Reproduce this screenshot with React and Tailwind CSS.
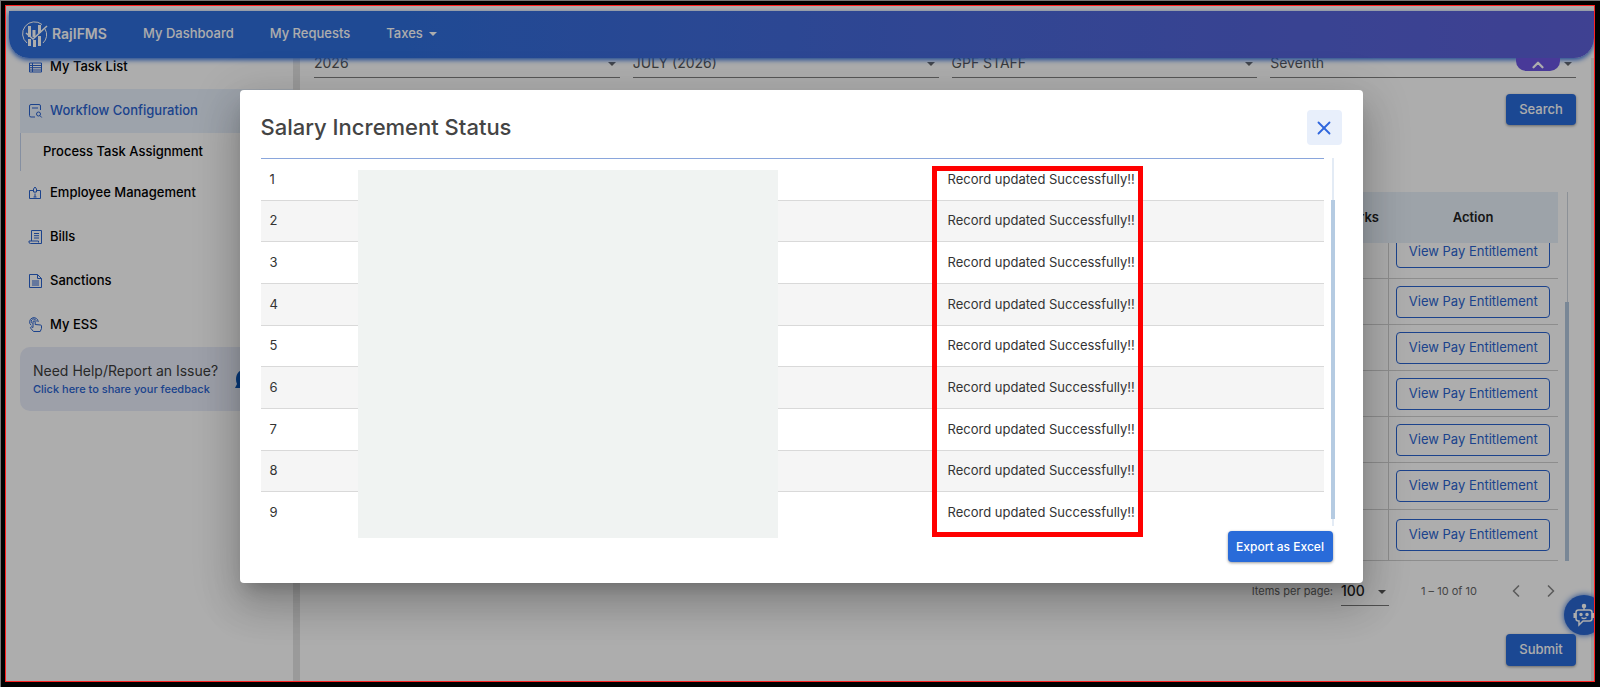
import { ChevronLeft, ChevronRight, ChevronUp, X } from 'lucide-react'

const filters = [
  { id: 'year', label: 'Year', value: '2026' },
  { id: 'month', label: 'Month', value: 'JULY (2026)' },
  { id: 'group', label: 'Bill group', value: 'GPF STAFF' },
  { id: 'commission', label: 'Pay commission', value: 'Seventh' },
]

const records = [1, 2, 3, 4, 5, 6, 7, 8, 9]

const payRows = ['h-[46px]', 'h-[46px]', 'h-[46px]', 'h-[46px]', 'h-[47px]', 'h-[51px]']

function Logo() {
  return (
    <svg viewBox="0 0 26 28" className="h-7 w-[26px]" fill="none" stroke="#fff" aria-hidden="true">
      <path d="M20 4.5A11 11 0 1 0 5 23M23 9a11 11 0 0 1-2 14" strokeWidth="1" />
      <path d="M7.5 6v11M12 10v7M17.5 5v8" strokeWidth="3" />
      <path d="M4 13l7 6L25 6" strokeWidth="1.6" />
      <path d="M7.5 19v7M12.5 20v7M17.5 16v10" strokeWidth="3" />
    </svg>
  )
}

function MenuIcon({ name }) {
  return (
    <svg viewBox="0 0 16 16" className="h-4 w-4 shrink-0" fill="none" stroke="#2a63cf" aria-hidden="true">
      {name === 'tasks' && <path d="M1.5 4h12v9h-12zM4.5 4v9M1.5 6.5h12M1.5 8.7h12M1.5 11h12" />}
      {name === 'workflow' && (
        <path d="M7 14H3A1.5 1.5 0 0 1 1.5 12.5V3A1.5 1.5 0 0 1 3 1.5h8A1.5 1.5 0 0 1 12.5 3v4M4 5h6M10.5 13a2 2 0 1 0 0-4 2 2 0 0 0 0 4M12 12.6l1.7 1.9" />
      )}
      {name === 'employee' && (
        <path d="M5.5 5.5h-4v8h11v-8h-4M5.5 7V4L7 2l1.5 2v3zM7 9v3M5.5 12h3M7 7.5v1" />
      )}
      {name === 'bills' && <path d="M3.5 1.5h10v13h-11A1.500 1.500 0 0 1 1 13v-1h9.500v1.500M3.500 1.500V12M6 4.500h5M6 6.700h5M6 9h5" />}
      {name === 'sanctions' && <path d="M1.5 1.5h8l4 4v9h-12zM9.5 1.5v4h4M4 8h7M4 10h7M4 12h7" />}
      {name === 'ess' && (
        <>
          <path d="M3.200 8.300A4.300 4.300 0 1 1 10.200 5M4.300 6.500A2.500 2.500 0 1 1 8.200 4.500" />
          <path d="M5 5v5.500L3.500 9.800c-.9 0-1.200.7-.8 1.400L5.500 14.500h6.700l1.300-3V9c0-.6-.5-1-1-1L7.200 7.500V5a1.100 1.100 0 0 0-2.200 0z" />
        </>
      )}
    </svg>
  )
}

function Caret({ className = '' }) {
  return (
    <svg viewBox="0 0 8 4" className={`h-1 w-2 ${className}`} fill="currentColor" aria-hidden="true">
      <path d="M0 0h8L4 4z" />
    </svg>
  )
}

function MenuItem({ icon, active, children }) {
  return (
    <a
      href="#"
      className={`flex h-11 items-center gap-1.5 pl-2 text-[13px] font-medium ${
        active ? 'bg-[#e8f0fd] text-[#2a63cf]' : 'text-black'
      }`}
    >
      <MenuIcon name={icon} />
      {children}
    </a>
  )
}

function Header() {
  return (
    <header className="relative z-10 ml-[3px] mt-[5px] flex h-[47px] items-center rounded-b-[20px] bg-linear-to-r from-[#2f6dda] from-25% to-[#5d60d7] pb-px pl-[13px] text-[13px] font-medium text-white shadow-[0_2px_5px_#2f6dda]">
      <a href="#" className="flex w-[121px] items-center gap-1 text-sm font-semibold">
        <Logo />
        RajIFMS
      </a>
      <nav className="flex items-center gap-9">
        <a href="#">My Dashboard</a>
        <a href="#">My Requests</a>
        <button type="button" className="flex items-center gap-1.5">
          Taxes
          <Caret />
        </button>
      </nav>
      <button
        type="button"
        aria-label="Collapse header"
        className="absolute right-[34px] top-full flex h-[13px] w-11 items-center justify-center rounded-b-[10px] bg-[#6a55e0]"
      >
        <ChevronUp size={18} strokeWidth={3} />
      </button>
    </header>
  )
}

function Sidebar() {
  return (
    <aside className="w-[287px] shrink-0 pl-[14px]">
      <nav className="-mt-[13px]">
        <MenuItem icon="tasks">My Task List</MenuItem>
        <MenuItem icon="workflow" active>Workflow Configuration</MenuItem>
        <a
          href="#"
          className="flex h-[38px] items-center border-l border-[#c5d3ee] pl-[22px] text-[13px] font-medium text-black"
        >
          Process Task Assignment
        </a>
        <MenuItem icon="employee">Employee Management</MenuItem>
        <MenuItem icon="bills">Bills</MenuItem>
        <MenuItem icon="sanctions">Sanctions</MenuItem>
        <MenuItem icon="ess">My ESS</MenuItem>
      </nav>
      <div className="flex h-16 items-center justify-between rounded-[10px] bg-[#e8ecfa] pl-[13px] pr-[30px]">
        <div>
          <p className="whitespace-nowrap text-sm text-[#3c3c3c]">Need Help/Report an Issue?</p>
          <a href="#" className="block text-[11px] font-medium text-[#2a63cf]">Click here to share your feedback</a>
        </div>
        <svg viewBox="0 0 28 24" className="h-6 w-7 shrink-0" fill="#0b55b5" aria-hidden="true">
          <path d="M0 21l2-4C-1 10 3 2 11 2s12 6 10 12-10 7-16 7z" />
        </svg>
      </div>
    </aside>
  )
}

function PrimaryButton({ className, children }) {
  return (
    <button
      type="button"
      className={`rounded bg-[#296bd9] font-medium text-white shadow-[0_1px_3px_#0006] ${className}`}
    >
      {children}
    </button>
  )
}

function PayTable() {
  return (
    <div className="mt-[67px] flex gap-[7px]">
      <table className="flex-1 text-[13px]">
        <thead>
          <tr className="h-[51px] bg-[#e8f0fa] text-[#222]">
            <th className="text-left font-semibold">Employee Name</th>
            <th className="w-[200px] pr-[9px] text-right font-semibold">Remarks</th>
            <th className="w-[170px] font-semibold">Action</th>
          </tr>
        </thead>
        <tbody>
          <tr className="border-b border-[#d0d0d0]">
            <td />
            <td className="border-r border-[#d0d0d0]" />
            <td>
              <div className="flex h-[35px] items-end justify-center overflow-hidden pb-[10px]">
                <ViewButton />
              </div>
            </td>
          </tr>
          {payRows.map((height, index) => (
            <tr key={index} className={`border-b border-[#d0d0d0] ${height}`}>
              <td />
              <td className="border-r border-[#d0d0d0]" />
              <td className="text-center">
                <ViewButton />
              </td>
            </tr>
          ))}
        </tbody>
      </table>
      <div className="flex w-1 flex-col items-center">
        <div className="h-[110px] w-px bg-[#cfd6df]" />
        <div className="w-1 flex-1 bg-[#b3c8dd]" />
      </div>
    </div>
  )
}

function ViewButton() {
  return (
    <button
      type="button"
      className="h-8 w-[154px] shrink-0 rounded border border-[#2a63cf] text-[13px] text-[#2a63cf]"
    >
      View Pay Entitlement
    </button>
  )
}

function Paginator() {
  return (
    <div className="mt-[15px] flex items-center justify-end pr-[15px] text-[11px] text-[#666]">
      <label htmlFor="page-size">Items per page:</label>
      <div className="relative ml-2 w-12">
        <select
          id="page-size"
          defaultValue="100"
          className="h-[30px] w-full appearance-none border-b border-[#777] text-sm font-medium text-[#222]"
        >
          <option>100</option>
        </select>
        <Caret className="pointer-events-none absolute right-[3px] top-[14px] text-[#555]" />
      </div>
      <span className="ml-8 w-[53px] whitespace-nowrap">1 – 10 of 10</span>
      <button type="button" aria-label="Previous page" className="ml-8 text-[#888]">
        <ChevronLeft size={20} />
      </button>
      <button type="button" aria-label="Next page" className="ml-[15px] text-[#888]">
        <ChevronRight size={20} />
      </button>
    </div>
  )
}

function Content() {
  return (
    <main className="min-w-0 flex-1 pl-[14px] pr-[15px]">
      <div className="-mt-[10px] grid grid-cols-4 gap-[13px]">
        {filters.map((filter) => (
          <div key={filter.id} className="relative">
            <select
              id={filter.id}
              aria-label={filter.label}
              defaultValue={filter.value}
              className="h-[30px] w-full appearance-none border-b border-[#808080] text-sm text-[#555]"
            >
              <option>{filter.value}</option>
            </select>
            <Caret className="pointer-events-none absolute right-1 top-[14px] text-[#666]" />
          </div>
        ))}
      </div>
      <div className="mt-4 flex justify-end">
        <PrimaryButton className="h-[31px] w-[70px] text-[13px]">Search</PrimaryButton>
      </div>
      <div className="pr-[7px]">
        <PayTable />
      </div>
      <Paginator />
      <div className="mt-7 flex justify-end">
        <PrimaryButton className="h-8 w-[70px] text-[13px]">Submit</PrimaryButton>
      </div>
    </main>
  )
}

function StatusDialog() {
  return (
    <div
      role="dialog"
      aria-labelledby="status-title"
      className="relative w-[1123px] rounded bg-white px-[21px] pb-[21px] shadow-[0_11px_15px_-7px_#0003,0_24px_38px_3px_#00000024,0_9px_46px_8px_#0000001f]"
    >
      <div className="flex items-center justify-between pt-5">
        <h2 id="status-title" className="text-[22px] font-medium text-[#444]">Salary Increment Status</h2>
        <button
          type="button"
          aria-label="Close"
          className="flex h-[35px] w-[35px] items-center justify-center rounded-sm bg-[#e8effb] text-[#2f66dd]"
        >
          <X size={22} strokeWidth={2} />
        </button>
      </div>

      <div className="mt-[13px] flex h-[368px] gap-[7px] overflow-hidden pr-[7px]">
        <table className="h-[376px] flex-1 table-fixed border-t border-[#8aa6dc] text-[13px] text-[#333]">
          <tbody>
            {records.map((record) => (
              <tr key={record} className="border-b border-[#d9d9d9] even:bg-[#f5f5f5]">
                <td className="w-[678px] pl-[9px]">{record}</td>
                <td className="pl-[9px]">Record updated Successfully!!</td>
              </tr>
            ))}
          </tbody>
        </table>
        <div className="flex w-1 flex-col items-center">
          <div className="h-[42px] w-0.5 bg-[#e3ebf5]" />
          <div className="w-1 flex-1 bg-[#b5cbe2]" />
          <div className="h-[7px] w-0.5 bg-[#e3ebf5]" />
        </div>
      </div>

      <div className="mt-[5px] flex justify-end pr-[9px]">
        <PrimaryButton className="h-[31px] w-[105px] text-xs">Export as Excel</PrimaryButton>
      </div>

      {/* redacted names and the highlighted status column */}
      <div className="absolute left-[118px] top-20 h-[368px] w-[420px] bg-[#f0f3f2]" />
      <div className="absolute left-[692px] top-[76px] h-[371px] w-[211px] border-[5px] border-[#ff0000]" />
    </div>
  )
}

function BotIcon() {
  return (
    <svg viewBox="0 0 24 24" className="h-6 w-6" fill="none" stroke="#fff" strokeWidth="1.5" aria-hidden="true">
      <path d="M6.5 7h11A2.5 2.5 0 0 1 20 9.5v6a2.5 2.5 0 0 1-2.5 2.5H11l-4 4v-4h-.5A2.5 2.5 0 0 1 4 15.5v-6A2.5 2.5 0 0 1 6.5 7zM12 7V3M9.5 14.5c1.5 1.3 3.5 1.3 5 0" />
      <path d="M3 10v5M21 10v5" strokeWidth="3" />
      <circle cx="12" cy="3" r="1.5" fill="#fff" />
      <circle cx="9" cy="11.5" r="1" fill="#fff" />
      <circle cx="15" cy="11.5" r="1" fill="#fff" />
    </svg>
  )
}

export default function App() {
  return (
    <div className="flex min-h-screen border-l border-t border-[#777] bg-black pb-[5px] pl-1 pr-[5px] pt-1 font-['Inter',sans-serif]">
      <div className="relative flex flex-1 flex-col overflow-hidden border border-[#ff2020] bg-white">
        <Header />
        <div className="flex flex-1 overflow-hidden">
          <Sidebar />
          <div className="w-[7px] shrink-0 bg-[#e4e4e4]" />
          <Content />
          <div className="w-[3px] shrink-0 bg-[#e8e8e8]" />
        </div>

        <button
          type="button"
          aria-label="Open chat assistant"
          className="absolute -right-[10px] bottom-[46px] z-10 flex h-10 w-10 items-center rounded-full bg-[#2a66d0] pl-2 shadow-[0_0_6px_#2a66d0]"
        >
          <BotIcon />
        </button>

        <div className="absolute inset-0 z-20 flex items-start justify-center bg-black/32 pl-0.5 pt-[84px]">
          <StatusDialog />
        </div>
      </div>
    </div>
  )
}
